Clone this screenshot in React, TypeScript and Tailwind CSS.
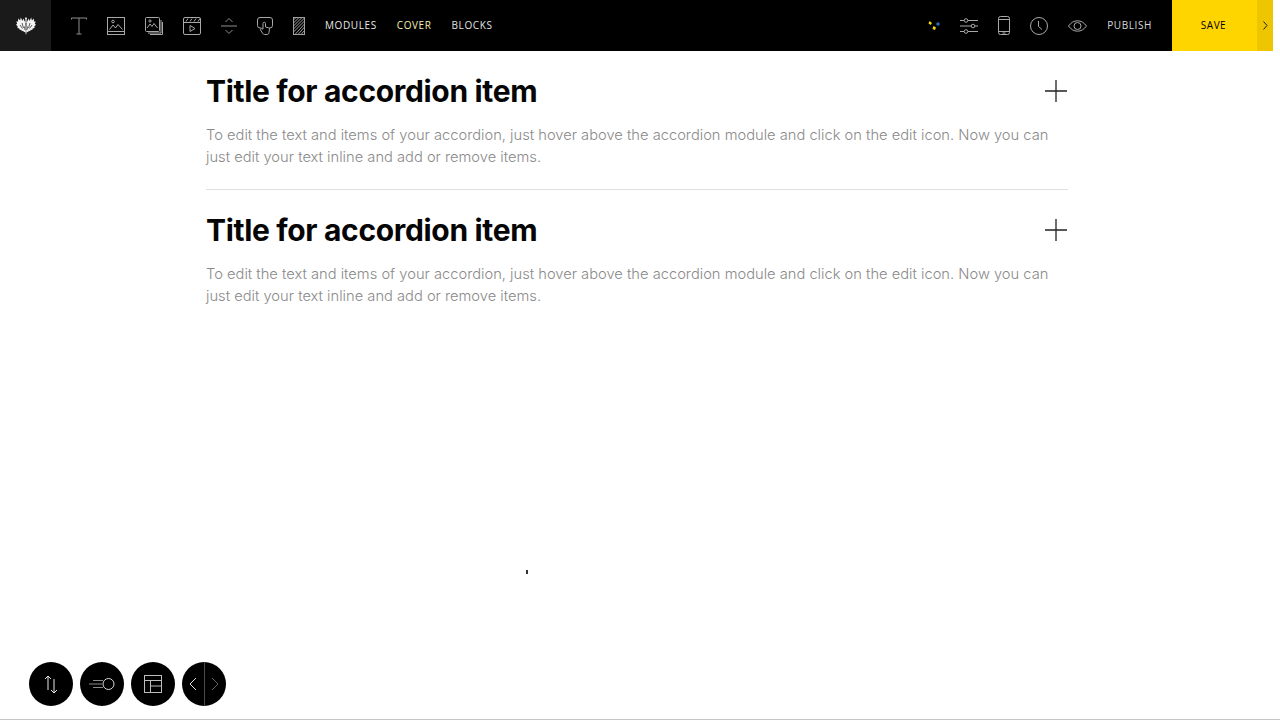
const inter = "font-['Inter',sans-serif]";

const items = [
  "To edit the text and items of your accordion, just hover above the accordion module and click on the edit icon. Now you can just edit your text inline and add or remove items.",
  "To edit the text and items of your accordion, just hover above the accordion module and click on the edit icon. Now you can just edit your text inline and add or remove items.",
];

function Eagle() {
  const wing =
    "M10.600 5.500L12.800 1.500l.7 2.500L15.200.6l.7 2.800L18 1.600l-.1 2.900 1.800-.1-.9 2.300 1.200 1-1.600 1.600.1 1.800-1.800.3-.5 1.500-1.600-.2-.4 1.500-1.500-.5-.6 1.500-1.200-.5L10 18z";
  return (
    <svg width="20" height="18" viewBox="0 0 20 18" fill="#f4f4f4">
      <path d={wing} />
      <path d={wing} transform="matrix(-1 0 0 1 20 0)" />
      <path d="M10 0l1.100 1.500-.5.500v4H9.400V2L8.800 1.500z" />
      <path d="M6 6l1.500 5M14 6l-1.500 5M4 8l2.500 3.500M16 8l-2.500 3.500M8.500 9.500l.5 3.500M11.500 9.500l-.5 3.500" stroke="#1a1a1a" strokeWidth="0.7" />
    </svg>
  );
}

function TextIcon() {
  return (
    <svg width="16" height="18" viewBox="0 0 16 18" fill="none" stroke="#8f8f8f" strokeWidth="1">
      <path d="M.5 2.500V1h15v1.500M8 1v16M5.500 17h5" />
    </svg>
  );
}

function ImageIcon() {
  return (
    <svg width="18" height="18" viewBox="0 0 18 18" fill="none" stroke="#a8a8a8" strokeWidth="1">
      <rect x=".5" y=".5" width="17" height="17" />
      <path d="M.5 14.500h17M2.500 12.500l3.500-4.500 2.500 3 2.500-3.500 4.500 5" />
      <circle cx="6" cy="4.500" r="1.300" />
    </svg>
  );
}

function GalleryIcon() {
  return (
    <svg width="18" height="18" viewBox="0 0 18 18" fill="none" stroke="#a8a8a8" strokeWidth="1">
      <rect x=".5" y=".5" width="14" height="14" rx="1" />
      <path d="M16 3v13H3M17.500 5v12.500H5M2 11l3-4 2 2.500 2-3 3.500 4.500" />
      <circle cx="5" cy="4" r="1.100" />
    </svg>
  );
}

function ClapperIcon() {
  return (
    <svg width="18" height="18" viewBox="0 0 18 18" fill="none" stroke="#a8a8a8" strokeWidth="1">
      <rect x=".5" y=".5" width="17" height="17" rx="1.500" />
      <path d="M.5 5.500h17M3 4.500l2-3M7 4.500l2-3M11 4.500l2-3M15 4.500l2-3" />
      <path d="M7 8.500l5 3-5 3z" />
    </svg>
  );
}

function SpacerIcon() {
  return (
    <svg width="16" height="18" viewBox="0 0 16 18" fill="none" stroke="#8f8f8f" strokeWidth="1">
      <path d="M4.500 5L8 1.500 11.500 5M0 9h16M4.500 13L8 16.500 11.500 13" />
    </svg>
  );
}

function TouchIcon() {
  return (
    <svg width="16" height="18" viewBox="0 0 16 18" fill="none" stroke="#a8a8a8" strokeWidth="1">
      <path d="M4.500 11H3a2.500 2.500 0 0 1-2.500-2.500V3A2.500 2.500 0 0 1 3 .5h10A2.500 2.500 0 0 1 15.500 3v5.500A2.500 2.500 0 0 1 13 11h-1" />
      <path d="M6 12V6.500a1.200 1.200 0 0 1 2.500 0V10l3 .8c.7.200 1 .7 1 1.400l-.5 3.300c0 1-.8 2-2 2H7.500c-.8 0-1.300-.4-1.700-1L3.500 13c-.4-.8.700-1.800 1.500-1z" />
    </svg>
  );
}

function HatchIcon() {
  return (
    <svg width="12" height="18" viewBox="0 0 12 18" fill="none" stroke="#a0a0a0" strokeWidth="1">
      <rect x=".5" y=".5" width="11" height="17" />
      <path d="M.5 3L3 .5M.5 6L6 .5M.5 9L9 .5M.5 12L11.500 1M.5 15L11.500 4M2 17.500L11.500 7M5 17.500L11.500 10M8 17.500L11.500 13.500" />
    </svg>
  );
}

function DotsIcon() {
  return (
    <svg width="12" height="12" viewBox="0 0 12 12">
      <path d="M1.500 1L4 3 2.500 5 .5 3.500z" fill="#f5d90a" />
      <path d="M5.500 6L8 7.500 7 10 4.500 9z" fill="#f5d90a" />
      <path d="M8 3.500h1.500V2h1v1.500H12v1h-1.500V6h-1V4.500H8z" fill="#2f8fe8" />
    </svg>
  );
}

function SlidersIcon() {
  return (
    <svg width="18" height="16" viewBox="0 0 18 16" fill="none" stroke="#a8a8a8" strokeWidth="1">
      <path d="M0 2.500h4M8 2.500h10M0 8h11M15 8h3M0 13.500h4M8 13.500h10" />
      <circle cx="6" cy="2.500" r="1.800" />
      <circle cx="13" cy="8" r="1.800" />
      <circle cx="6" cy="13.500" r="1.800" />
    </svg>
  );
}

function PhoneIcon() {
  return (
    <svg width="12" height="19" viewBox="0 0 12 19" fill="none" stroke="#a8a8a8" strokeWidth="1">
      <rect x=".5" y=".5" width="11" height="18" rx="2" />
      <path d="M.5 3.500h11M.5 15.500h11M4.500 17h3" />
    </svg>
  );
}

function ClockIcon() {
  return (
    <svg width="18" height="18" viewBox="0 0 18 18" fill="none" stroke="#a8a8a8" strokeWidth="1">
      <circle cx="9" cy="9" r="8.500" />
      <path d="M8.500 4v5.500l3.500 3" />
    </svg>
  );
}

function EyeIcon() {
  return (
    <svg width="19" height="12" viewBox="0 0 19 12" fill="none" stroke="#a8a8a8" strokeWidth="1">
      <path d="M.5 6C3 2.500 6 .8 9.500.8S16 2.500 18.500 6c-2.500 3.500-5.500 5.200-9 5.200S3 9.500.5 6z" />
      <circle cx="9.500" cy="6" r="3.500" />
    </svg>
  );
}

function PlusIcon() {
  return (
    <svg width="22" height="22" viewBox="0 0 22 22" fill="none" stroke="#222222" strokeWidth="1.300" className="mr-px">
      <path d="M11 0v22M0 11h22" />
    </svg>
  );
}

function Round({ children }: { children: React.ReactNode }) {
  return <div className="w-11 h-11 rounded-full bg-black flex items-center justify-center">{children}</div>;
}

export default function App() {
  return (
    <div className={`relative h-[720px] overflow-hidden bg-white flex flex-col ${inter}`}>
      {/* Top toolbar */}
      <header className="h-[51px] mr-[7px] bg-black flex items-center gap-5 flex-shrink-0">
        <div className="w-[51px] h-full bg-[#1a1a1a] flex items-center justify-center">
          <Eagle />
        </div>
        <TextIcon />
        <ImageIcon />
        <GalleryIcon />
        <ClapperIcon />
        <SpacerIcon />
        <TouchIcon />
        <HatchIcon />
        <span className="font-['Open_Sans',sans-serif] text-[10px] font-medium tracking-[0.06em] text-[#e8e8e8]">MODULES</span>
        <span className="font-['Open_Sans',sans-serif] text-[10px] font-medium tracking-[0.06em] text-[#f3efb0]">COVER</span>
        <span className="font-['Open_Sans',sans-serif] text-[10px] font-medium tracking-[0.06em] text-[#e0e0e0]">BLOCKS</span>

        <div className="ml-auto flex items-center gap-5">
          <DotsIcon />
          <SlidersIcon />
          <PhoneIcon />
          <ClockIcon />
          <EyeIcon />
          <span className="font-['Open_Sans',sans-serif] text-[10px] font-medium tracking-[0.06em] text-[#d8d8d8]">PUBLISH</span>
          <div className="h-[51px] w-[101px] flex bg-[#ffd500] text-black">
            <div className="flex-1 flex items-center justify-center pr-[2px]">
              <span className="font-['Open_Sans',sans-serif] text-[10px] tracking-[0.05em]">SAVE</span>
            </div>
            <div className="w-4 h-full bg-[#edc500] flex items-center justify-center">
              <svg width="5" height="9" viewBox="0 0 5 9" fill="none" stroke="#222222" strokeWidth="1">
                <path d="M.5.500l3.500 4-3.500 4" />
              </svg>
            </div>
          </div>
        </div>
      </header>

      {/* Accordion */}
      <main className="ml-[206px] w-[862px] flex-1">
        {items.map((text, i) => (
          <section key={i} className={i === 0 ? "border-b border-[#dfdfdf] h-[139px]" : "h-[139px]"}>
            <div className="flex items-center justify-between pt-5 mb-[13px]">
              <h2 className="text-[30px] leading-[40px] font-bold tracking-[-0.33px] text-[#050505]">Title for accordion item</h2>
              <PlusIcon />
            </div>
            <p className="text-[14.7px] leading-[22px] font-light text-[#8a8a8a]">{text}</p>
          </section>
        ))}
      </main>

      {/* Bottom round buttons */}
      <div className="flex gap-[7px] pl-[29px] pb-[13px]">
        <Round>
          <svg width="14" height="19" viewBox="0 0 14 19" fill="none" stroke="#e8e8e8" strokeWidth="1">
            <path d="M4 15V1M1 4l3-3 3 3M10 4v14M7 15l3 3 3-3" />
          </svg>
        </Round>
        <Round>
          <svg width="26" height="14" viewBox="0 0 26 14" fill="none" stroke="#d8d8d8" strokeWidth="1">
            <circle cx="19.500" cy="7" r="5.500" />
            <path d="M4 3.500h10M0 7h13M4 10.500h10" stroke="#8a8a8a" />
          </svg>
        </Round>
        <Round>
          <svg width="18" height="18" viewBox="0 0 18 18" fill="none" stroke="#bdbdbd" strokeWidth="1">
            <rect x=".5" y=".5" width="17" height="17" />
            <path d="M.5 5.500h17M6.500 5.500v12M6.500 11h11" />
          </svg>
        </Round>
        <div className="w-11 h-11 rounded-full bg-black flex items-center justify-center">
          <svg width="44" height="44" viewBox="0 0 44 44" fill="none">
            <path d="M14 16l-6 6 6 6" stroke="#e0e0e0" />
            <path d="M22.500 0v44" stroke="#4a4a4a" />
            <path d="M30 16l6 6-6 6" stroke="#666666" />
          </svg>
        </div>
      </div>

      {/* Bottom edge of the window */}
      <div className="h-px bg-[#c4c4c4] flex-shrink-0" />

      {/* Mouse pointer */}
      <div className="absolute left-[526px] top-[570px] w-[2px] h-[4px] bg-[#333333]" />
    </div>
  );
}
